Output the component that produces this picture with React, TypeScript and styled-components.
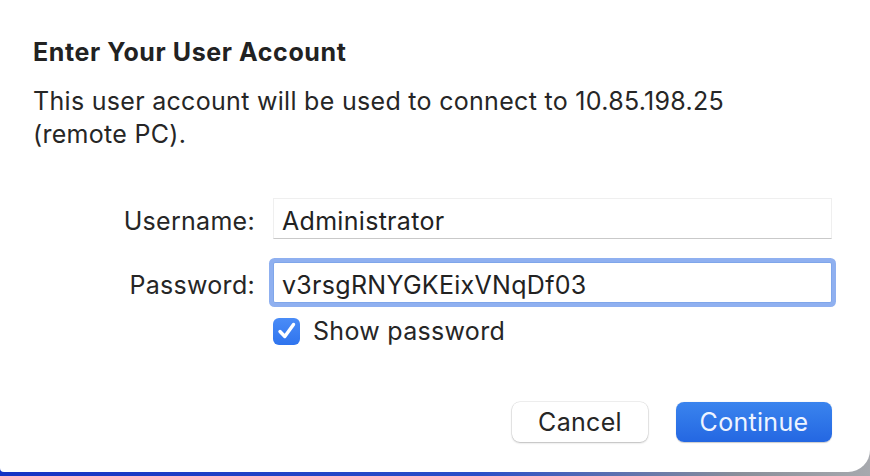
import React from 'react'
import styled, { createGlobalStyle } from 'styled-components'

const GlobalStyle = createGlobalStyle`
    html, body {
        margin: 0;
        padding: 0;
        width: 870px;
        height: 476px;
        overflow: hidden;
        background: linear-gradient(90deg, #1533c4 0%, #2a4fc8 55%, #8a8f9a 85%, #a7a9ae 100%);
        font-family: Inter, "Noto Sans", "Liberation Sans", sans-serif;
        -webkit-font-smoothing: antialiased;
    }
`

const StyledDialog = styled.div`
    width: 870px;
    height: 472px;
    box-sizing: border-box;
    background: #ffffff;
    border-bottom-right-radius: 22px;
    border-bottom-left-radius: 4px;
    padding: 36px 38px 0 33px;
    display: flex;
    flex-direction: column;
    color: #262626;
`

const StyledTitle = styled.h1`
    margin: 0;
    font-size: 25px;
    line-height: 32px;
    font-weight: 700;
    letter-spacing: 0.6px;
    color: #222222;
`

const StyledMessage = styled.p`
    margin: 17px 0 0;
    font-size: 25px;
    line-height: 33px;
    font-weight: 400;
    letter-spacing: 0.3px;
    color: #262626;
`

const StyledForm = styled.div`
    margin-top: 47px;
    display: grid;
    grid-template-columns: 222px 1fr;
    column-gap: 18px;
    row-gap: 23px;
    align-items: center;
`

const StyledLabel = styled.label`
    text-align: right;
    padding-top: 5px;
    font-size: 25px;
    letter-spacing: 0.3px;
    color: #262626;
`

const StyledField = styled.div<{ $focused?: boolean }>`
    height: 41px;
    box-sizing: border-box;
    display: flex;
    align-items: center;
    padding: 5px 8px 0;
    font-size: 25px;
    letter-spacing: 0.3px;
    color: #222222;
    background: #ffffff;
    border: 1px solid ${({ $focused }) => ($focused ? '#7fa6ea' : '#efefef')};
    border-bottom-color: ${({ $focused }) => ($focused ? '#7fa6ea' : '#c9c9c9')};
    box-shadow: ${({ $focused }) => ($focused ? '0 0 0 4px #8fb0f0' : 'none')};
    border-radius: ${({ $focused }) => ($focused ? '2px' : '0')};
`

const StyledCheckRow = styled.div`
    grid-column: 2;
    margin-top: -10px;
    display: flex;
    align-items: center;
    gap: 13px;
    font-size: 25px;
    letter-spacing: 0.3px;
    color: #262626;
`

const StyledCheckbox = styled.span`
    width: 27px;
    height: 27px;
    border-radius: 6px;
    background: linear-gradient(180deg, #4a8cf7 0%, #2f74ee 100%);
    display: flex;
    align-items: center;
    justify-content: center;
`

const StyledActions = styled.div`
    margin-top: 56px;
    display: flex;
    justify-content: flex-end;
    gap: 28px;
`

const StyledButton = styled.button<{ $primary?: boolean }>`
    height: 40px;
    width: ${({ $primary }) => ($primary ? '156px' : '136px')};
    border: none;
    border-radius: 8px;
    font-family: inherit;
    font-size: 25px;
    letter-spacing: 0.3px;
    padding: 0;
    color: ${({ $primary }) => ($primary ? '#eef4ff' : '#262626')};
    background: ${({ $primary }) =>
        $primary ? 'linear-gradient(180deg, #3a84ee 0%, #2467e2 100%)' : '#ffffff'};
    box-shadow: ${({ $primary }) =>
        $primary
            ? '0 0.5px 1px rgba(0,0,0,0.2)'
            : '0 0 0 0.5px rgba(0,0,0,0.12), 0 1px 2px rgba(0,0,0,0.22)'};
`

const App = () => {
    return (
        <>
            <GlobalStyle />
            <StyledDialog>
                <StyledTitle>Enter Your User Account</StyledTitle>
                <StyledMessage>
                    This user account will be used to connect to 10.85.198.25
                    <br />
                    (remote PC).
                </StyledMessage>

                <StyledForm>
                    <StyledLabel>Username:</StyledLabel>
                    <StyledField>Administrator</StyledField>
                    <StyledLabel>Password:</StyledLabel>
                    <StyledField $focused>v3rsgRNYGKEixVNqDf03</StyledField>
                    <StyledCheckRow>
                        <StyledCheckbox>
                            <svg width='24' height='24' viewBox='0 0 24 24'>
                                <path d='M5 12.5 L9.8 17.5 L18.5 5.5' fill='none' stroke='#ffffff' strokeWidth='3.4' strokeLinecap='round' strokeLinejoin='round' />
                            </svg>
                        </StyledCheckbox>
                        Show password
                    </StyledCheckRow>
                </StyledForm>

                <StyledActions>
                    <StyledButton>Cancel</StyledButton>
                    <StyledButton $primary>Continue</StyledButton>
                </StyledActions>
            </StyledDialog>
        </>
    )
}

export default App
